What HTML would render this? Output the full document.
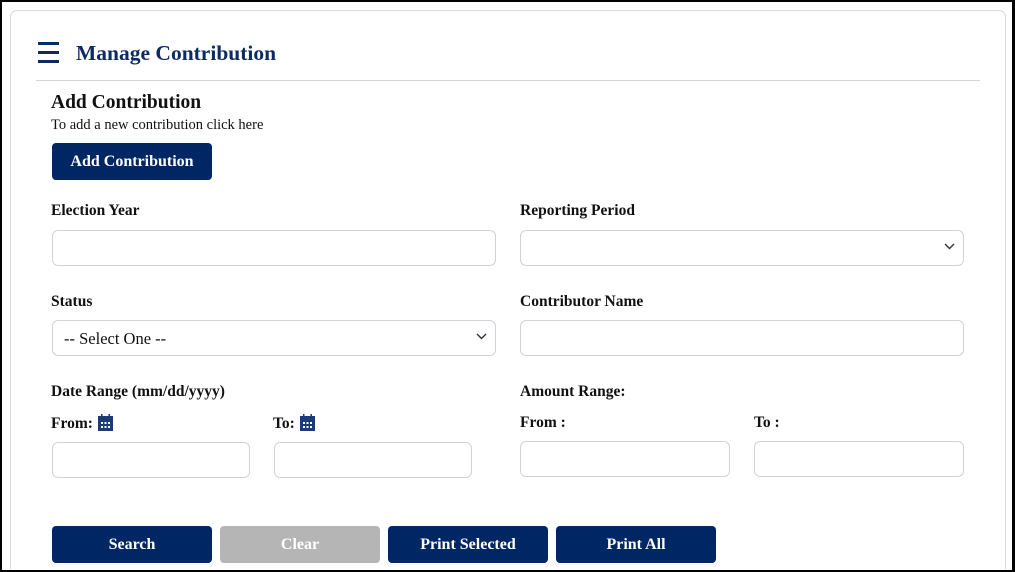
<!DOCTYPE html>
<html style="overflow:hidden;width:1015px;height:572px"><head><style>
*{box-sizing:border-box;margin:0;padding:0}
body{width:1015px;height:572px;overflow:hidden;background:#fff;font-family:"Liberation Serif",serif;position:relative;color:#111}
.frame{position:absolute;left:0;top:0;width:1015px;height:572px;border:2px solid #000;border-right-width:3px;border-bottom-width:2px}
.card{position:absolute;left:10px;top:10px;width:996px;height:559px;border:1px solid #d6d8dd;border-bottom:none;border-radius:7px 7px 0 0;background:#fff}
.a{position:absolute;white-space:nowrap}
.lbl{font-weight:bold;font-size:15.5px;color:#111}
.in{position:absolute;height:36px;border:1px solid #cfd2d8;border-radius:6px;background:#fff}
.btn{position:absolute;height:37px;border-radius:4px;background:#002664;color:#fff;font-size:16px;font-weight:bold;text-align:center;line-height:37px}
.chev{position:absolute;right:8px;top:12px}
.cal{display:inline-block;vertical-align:-3px;margin-left:5px}
</style></head><body>
<div class="card"></div>
<div class="a" style="left:38px;top:42px;width:21px;height:21px">
<div style="position:absolute;top:0;width:21px;height:3px;background:#0d2b63"></div>
<div style="position:absolute;top:9px;width:21px;height:3px;background:#0d2b63"></div>
<div style="position:absolute;top:18px;width:21px;height:3px;background:#0d2b63"></div>
</div>
<div class="a" style="left:76px;top:41px;font-size:21.5px;font-weight:bold;color:#0d2b63">Manage Contribution</div>
<div class="a" style="left:36px;top:80px;width:944px;height:1px;background:#d3d5da"></div>
<div class="a" style="left:51px;top:92px;font-size:19.5px;font-weight:bold">Add Contribution</div>
<div class="a" style="left:51px;top:117px;font-size:14.5px">To add a new contribution click here</div>
<div class="btn" style="left:52px;top:143px;width:160px">Add Contribution</div>

<div class="a lbl" style="left:51px;top:202px">Election Year</div>
<div class="in" style="left:52px;top:230px;width:444px"></div>
<div class="a lbl" style="left:520px;top:202px">Reporting Period</div>
<div class="in" style="left:520px;top:230px;width:444px"><svg class="chev" width="11" height="7" viewBox="0 0 11 7"><path d="M1 1l4.5 4.5L10 1" stroke="#333" stroke-width="1.4" fill="none"/></svg></div>

<div class="a lbl" style="left:51px;top:293px">Status</div>
<div class="in" style="left:52px;top:320px;width:444px"><span class="a" style="left:11px;top:8px;font-size:16.5px">-- Select One --</span><svg class="chev" width="11" height="7" viewBox="0 0 11 7"><path d="M1 1l4.5 4.5L10 1" stroke="#333" stroke-width="1.4" fill="none"/></svg></div>
<div class="a lbl" style="left:520px;top:293px">Contributor Name</div>
<div class="in" style="left:520px;top:320px;width:444px"></div>

<div class="a lbl" style="left:51px;top:383px">Date Range (mm/dd/yyyy)</div>
<div class="a lbl" style="left:520px;top:383px">Amount Range:</div>
<div class="a lbl" style="left:51px;top:414px">From:<svg class="cal" width="15" height="17" viewBox="0 0 15 17"><rect x="0" y="2" width="15" height="15" fill="#1a3a7a"/><rect x="3" y="0" width="1.5" height="4" fill="#1a3a7a"/><rect x="10.5" y="0" width="1.5" height="4" fill="#1a3a7a"/><g fill="#fff"><rect x="3" y="8" width="2" height="2"/><rect x="6.5" y="8" width="2" height="2"/><rect x="10" y="8" width="2" height="2"/><rect x="3" y="12" width="2" height="2"/><rect x="6.5" y="12" width="2" height="2"/><rect x="10" y="12" width="2" height="2"/></g></svg></div>
<div class="a lbl" style="left:273px;top:414px">To:<svg class="cal" width="15" height="17" viewBox="0 0 15 17"><rect x="0" y="2" width="15" height="15" fill="#1a3a7a"/><rect x="3" y="0" width="1.5" height="4" fill="#1a3a7a"/><rect x="10.5" y="0" width="1.5" height="4" fill="#1a3a7a"/><g fill="#fff"><rect x="3" y="8" width="2" height="2"/><rect x="6.5" y="8" width="2" height="2"/><rect x="10" y="8" width="2" height="2"/><rect x="3" y="12" width="2" height="2"/><rect x="6.5" y="12" width="2" height="2"/><rect x="10" y="12" width="2" height="2"/></g></svg></div>
<div class="a lbl" style="left:520px;top:414px">From :</div>
<div class="a lbl" style="left:754px;top:414px">To :</div>
<div class="in" style="left:52px;top:442px;width:198px"></div>
<div class="in" style="left:274px;top:442px;width:198px"></div>
<div class="in" style="left:520px;top:441px;width:210px"></div>
<div class="in" style="left:754px;top:441px;width:210px"></div>

<div class="btn" style="left:52px;top:526px;width:160px">Search</div>
<div class="btn" style="left:220px;top:526px;width:160px;background:#b5b5b5">Clear</div>
<div class="btn" style="left:388px;top:526px;width:160px">Print Selected</div>
<div class="btn" style="left:556px;top:526px;width:160px">Print All</div>
<div class="frame"></div>
</body></html>
